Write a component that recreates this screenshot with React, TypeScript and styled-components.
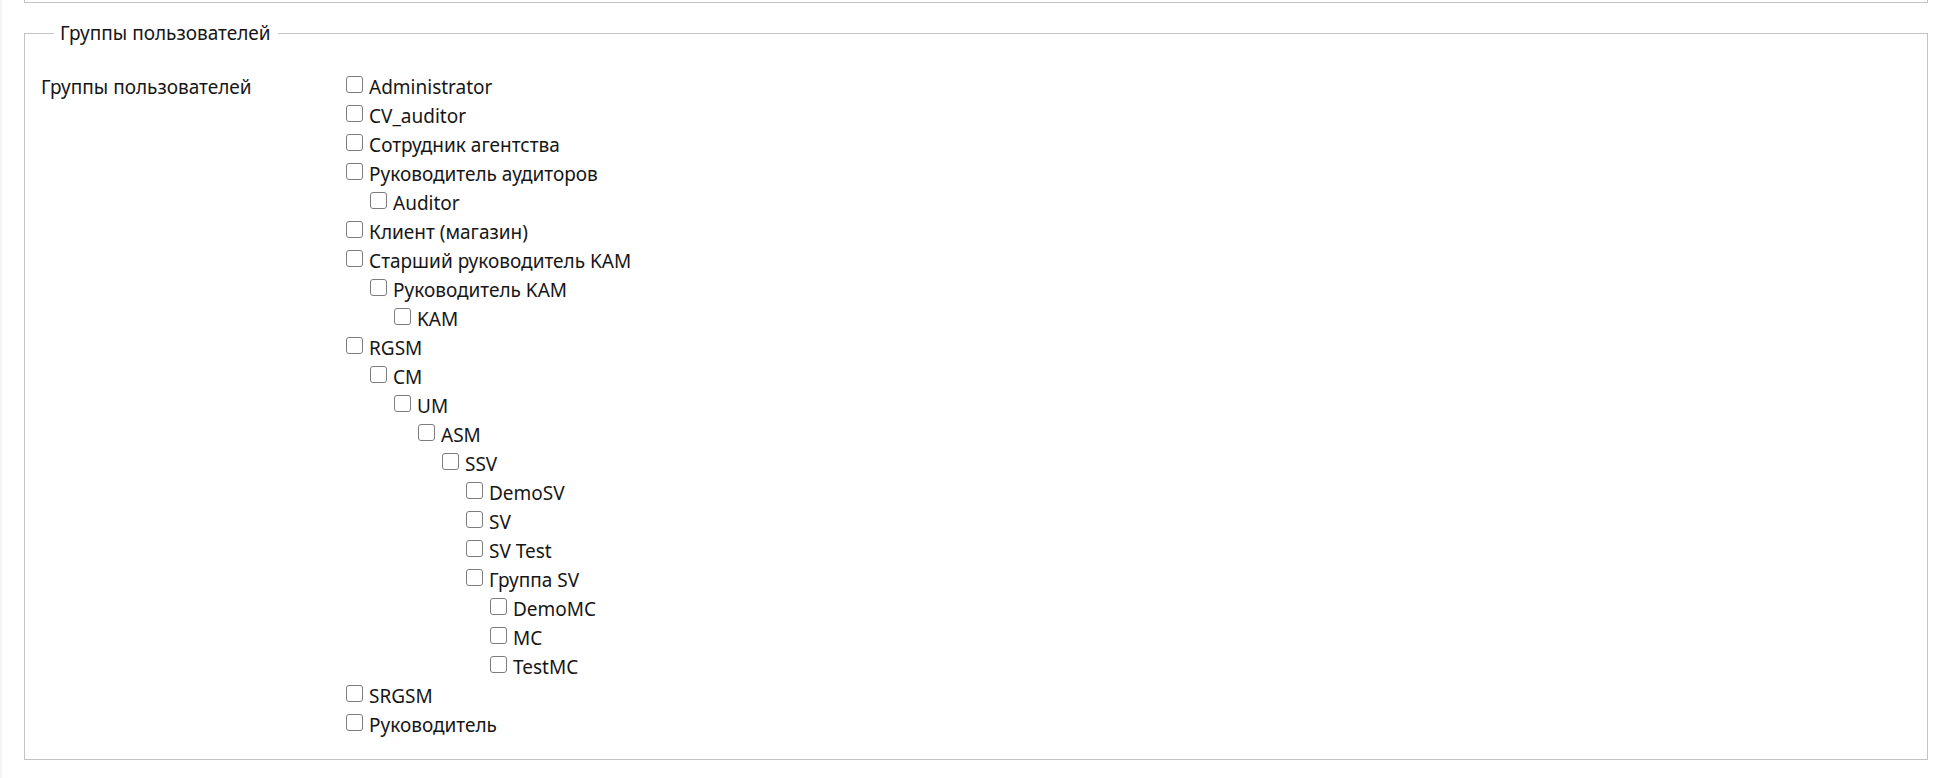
import styled, { createGlobalStyle } from "styled-components";

const GlobalStyle = createGlobalStyle`
  body {
    margin: 0;
    background: #ffffff;
    font-family: "Noto Sans", "Open Sans", "Liberation Sans", sans-serif;
    color: #161616;
  }
`;

type Group = {
  name: string;
  children?: Group[];
};

const groups: Group[] = [
  { name: "Administrator" },
  { name: "CV_auditor" },
  { name: "Сотрудник агентства" },
  { name: "Руководитель аудиторов", children: [{ name: "Auditor" }] },
  { name: "Клиент (магазин)" },
  {
    name: "Старший руководитель KAM",
    children: [{ name: "Руководитель KAM", children: [{ name: "KAM" }] }],
  },
  {
    name: "RGSM",
    children: [
      {
        name: "CM",
        children: [
          {
            name: "UM",
            children: [
              {
                name: "ASM",
                children: [
                  {
                    name: "SSV",
                    children: [
                      { name: "DemoSV" },
                      { name: "SV" },
                      { name: "SV Test" },
                      {
                        name: "Группа SV",
                        children: [
                          { name: "DemoMC" },
                          { name: "MC" },
                          { name: "TestMC" },
                        ],
                      },
                    ],
                  },
                ],
              },
            ],
          },
        ],
      },
    ],
  },
  { name: "SRGSM" },
  { name: "Руководитель" },
];

const Page = styled.div`
  min-height: 778px;
  box-sizing: border-box;
  padding: 0 18px 0 22px;
  border-left: 2px solid #f4f4f4;
`;

const PrevSection = styled.div`
  height: 2px;
  border: 1px solid #c4c4c4;
  border-top: none;
`;

const Fieldset = styled.fieldset`
  margin: 18px 0 0;
  padding: 28px 16px 19px;
  border: 1px solid #c4c4c4;
  min-width: 0;
`;

const Legend = styled.legend`
  margin-left: 13px;
  padding: 0 7px 0 6px;
  font-size: 19px;
  line-height: 24px;
`;

const FieldRow = styled.div`
  display: grid;
  grid-template-columns: 300px 1fr;
  font-size: 19px;
  line-height: 29px;
`;

const FieldLabel = styled.div`
  white-space: nowrap;
`;

const TreeList = styled.ul<{ $nested?: boolean }>`
  list-style: none;
  margin: 0;
  padding: 0 0 0 ${(p) => (p.$nested ? "24px" : "0")};
`;

const TreeItem = styled.li`
  margin: 0;
`;

const ItemLabel = styled.label`
  display: inline-block;
  white-space: nowrap;
`;

const Check = styled.input.attrs({ type: "checkbox" })`
  appearance: none;
  box-sizing: border-box;
  width: 17px;
  height: 17px;
  margin: 0 6px 0 5px;
  border: 1.5px solid #7d7d7d;
  border-radius: 3px;
  background: #ffffff;
  vertical-align: 1px;
`;

const GroupTree = ({ items, nested }: { items: Group[]; nested?: boolean }) => (
  <TreeList $nested={nested}>
    {items.map((g) => (
      <TreeItem key={g.name}>
        <ItemLabel>
          <Check />
          {g.name}
        </ItemLabel>
        {g.children && <GroupTree items={g.children} nested />}
      </TreeItem>
    ))}
  </TreeList>
);

export default function App() {
  return (
    <>
      <GlobalStyle />
      <Page>
        <PrevSection />
        <Fieldset>
          <Legend>Группы пользователей</Legend>
          <FieldRow>
            <FieldLabel>Группы пользователей</FieldLabel>
            <GroupTree items={groups} />
          </FieldRow>
        </Fieldset>
      </Page>
    </>
  );
}
